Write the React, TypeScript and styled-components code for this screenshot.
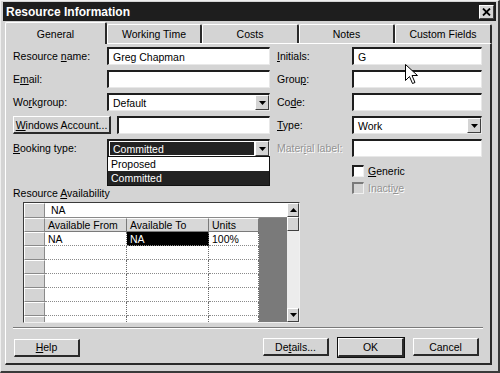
import React from "react";
import styled, { createGlobalStyle } from "styled-components";

const GlobalStyle = createGlobalStyle`
  html, body {
    margin: 0;
    padding: 0;
    background: #d4d4d4;
  }
  body {
    font-family: "Liberation Sans", Arial, sans-serif;
    font-size: 10.5px;
    color: #000;
  }
  * {
    box-sizing: border-box;
  }
`;

const Window = styled.div`
  position: relative;
  width: 500px;
  height: 373px;
  padding: 1px 2px 0 2px;
  background: #d4d4d4;
  border-right: 2px solid #3a3a3a;
  border-bottom: 2px solid #3a3a3a;
  border-left: 1px solid #efefef;
  border-top: 1px solid #efefef;
  overflow: hidden;
`;

const TitleBar = styled.div`
  display: flex;
  align-items: center;
  justify-content: space-between;
  height: 19px;
  padding: 0 2px 0 3px;
  background: #1e1e1e;
  color: #fff;
  font-weight: bold;
  font-size: 12px;
`;

const CloseButton = styled.div`
  display: flex;
  align-items: center;
  justify-content: center;
  width: 15px;
  height: 14px;
  background: #d4d4d4;
  border-top: 1px solid #fff;
  border-left: 1px solid #fff;
  border-right: 1px solid #404040;
  border-bottom: 1px solid #404040;
`;

const TabRow = styled.div`
  display: flex;
  align-items: flex-end;
  height: 21px;
  margin-top: 1px;
  padding-left: 2px;
  position: relative;
  z-index: 2;
`;

const Tab = styled.div<{ $active?: boolean; $w: number }>`
  display: flex;
  align-items: center;
  justify-content: center;
  width: ${(p) => p.$w}px;
  height: ${(p) => (p.$active ? 22 : 19)}px;
  margin-bottom: ${(p) => (p.$active ? -1 : 0)}px;
  background: #d4d4d4;
  border-top: 1px solid #fff;
  border-left: 1px solid #fff;
  border-right: 2px solid #2a2a2a;
  border-radius: 2px 2px 0 0;
`;

const Panel = styled.div`
  position: relative;
  margin-left: 2px;
  width: 487px;
  height: 322px;
  padding: 3px 7px 0 7px;
  border-top: 1px solid #fff;
  border-left: 1px solid #fff;
  border-right: 2px solid #2a2a2a;
  border-bottom: 2px solid #2a2a2a;
`;

const Form = styled.div`
  display: flex;
  gap: 7px;
`;

const Column = styled.div`
  display: flex;
  flex-direction: column;
  gap: 5px;
`;

const Row = styled.div`
  display: flex;
  align-items: center;
  height: 18px;
  position: relative;
`;

const Label = styled.div<{ $w: number; $disabled?: boolean }>`
  width: ${(p) => p.$w}px;
  color: ${(p) => (p.$disabled ? "#939393" : "#000")};
  text-shadow: ${(p) => (p.$disabled ? "1px 1px 0 #fff" : "none")};
  white-space: nowrap;
`;

const Field = styled.div<{ $w: number }>`
  display: flex;
  align-items: center;
  width: ${(p) => p.$w}px;
  height: 18px;
  padding-left: 4px;
  background: #fff;
  border-top: 2px solid #1e1e1e;
  border-left: 2px solid #1e1e1e;
  border-right: 1px solid #e8e8e8;
  border-bottom: 1px solid #e8e8e8;
  white-space: nowrap;
`;

const SelectBox = styled.div<{ $w: number }>`
  display: flex;
  width: ${(p) => p.$w}px;
  height: 18px;
  background: #fff;
  border-top: 2px solid #1e1e1e;
  border-left: 2px solid #1e1e1e;
  border-right: 1px solid #e8e8e8;
  border-bottom: 1px solid #e8e8e8;
`;

const SelectValue = styled.div<{ $dark?: boolean }>`
  flex: 1;
  display: flex;
  align-items: center;
  padding-left: 3px;
  margin: 1px;
  background: ${(p) => (p.$dark ? "#222" : "#fff")};
  color: ${(p) => (p.$dark ? "#fff" : "#000")};
`;

const ArrowButton = styled.div`
  display: flex;
  align-items: center;
  justify-content: center;
  width: 14px;
  height: 100%;
  background: #d4d4d4;
  border-top: 1px solid #fff;
  border-left: 1px solid #fff;
  border-right: 1px solid #404040;
  border-bottom: 1px solid #404040;
`;

const DropList = styled.div`
  position: absolute;
  left: 94px;
  top: 17px;
  width: 163px;
  background: #fff;
  border: 1px solid #111;
  z-index: 3;
`;

const DropItem = styled.div<{ $selected?: boolean }>`
  height: 14px;
  line-height: 14px;
  padding-left: 3px;
  background: ${(p) => (p.$selected ? "#222" : "#fff")};
  color: ${(p) => (p.$selected ? "#fff" : "#000")};
`;

const PushButton = styled.div<{ $w: number; $default?: boolean }>`
  display: flex;
  align-items: center;
  justify-content: center;
  width: ${(p) => p.$w}px;
  height: ${(p) => (p.$default ? 19 : 18)}px;
  background: #d4d4d4;
  border-top: 1px solid #fff;
  border-left: 1px solid #fff;
  border-right: 2px solid #2a2a2a;
  border-bottom: 2px solid #2a2a2a;
  outline: ${(p) => (p.$default ? "1px solid #111" : "none")};
  white-space: nowrap;
`;

const CheckRow = styled.div<{ $first?: boolean }>`
  display: flex;
  align-items: center;
  gap: 4px;
  height: 12px;
  margin-left: 75px;
  margin-top: ${(p) => (p.$first ? 3 : 0)}px;
`;

const CheckBox = styled.div<{ $disabled?: boolean }>`
  width: 12px;
  height: 12px;
  background: ${(p) => (p.$disabled ? "#d4d4d4" : "#fff")};
  border-top: 2px solid ${(p) => (p.$disabled ? "#7a7a7a" : "#1e1e1e")};
  border-left: 2px solid ${(p) => (p.$disabled ? "#7a7a7a" : "#1e1e1e")};
  border-right: 1px solid #f0f0f0;
  border-bottom: 1px solid #f0f0f0;
`;

const SectionLabel = styled.div`
  margin-top: 25px;
  height: 13px;
`;

const TableFrame = styled.div`
  display: flex;
  margin: 2px 0 0 10px;
  width: 277px;
  height: 121px;
  border-top: 1px solid #3a3a3a;
  border-left: 1px solid #3a3a3a;
  border-right: 1px solid #f0f0f0;
  border-bottom: 1px solid #f0f0f0;
  overflow: hidden;
`;

const TableBody = styled.div`
  display: flex;
  flex-direction: column;
  width: 263px;
`;

const TRow = styled.div<{ $h: number }>`
  display: flex;
  flex: none;
  height: ${(p) => p.$h}px;
`;

const RowHead = styled.div`
  width: 21px;
  flex: none;
  background: #d4d4d4;
  border-top: 1px solid #fff;
  border-left: 1px solid #fff;
  border-right: 1px solid #8a8a8a;
  border-bottom: 1px solid #8a8a8a;
`;

const EditCell = styled.div`
  flex: 1;
  display: flex;
  align-items: center;
  padding-left: 6px;
  background: #fff;
  border-bottom: 1px solid #8a8a8a;
`;

const HeadCell = styled.div<{ $w: number }>`
  width: ${(p) => p.$w}px;
  flex: none;
  display: flex;
  align-items: center;
  padding-left: 3px;
  background: #d8d8d8;
  border-top: 1px solid #fff;
  border-right: 1px solid #7a7a7a;
  border-bottom: 1px solid #7a7a7a;
  white-space: nowrap;
`;

const Cell = styled.div<{ $w: number; $selected?: boolean }>`
  width: ${(p) => p.$w}px;
  flex: none;
  display: flex;
  align-items: center;
  padding-left: 3px;
  background: ${(p) => (p.$selected ? "#000" : "#fff")};
  color: ${(p) => (p.$selected ? "#fff" : "#000")};
  border-right: 1px dotted #6a6a6a;
  border-bottom: 1px dotted #8a8a8a;
`;

const DarkFill = styled.div`
  flex: 1;
  background: #7a7a7a;
`;

const ScrollBar = styled.div`
  display: flex;
  flex-direction: column;
  width: 12px;
  flex: none;
  background: #ececec;
`;

const ScrollButton = styled.div<{ $h: number }>`
  display: flex;
  align-items: center;
  justify-content: center;
  height: ${(p) => p.$h}px;
  flex: none;
  background: #d4d4d4;
  border-top: 1px solid #fff;
  border-left: 1px solid #fff;
  border-right: 1px solid #404040;
  border-bottom: 1px solid #404040;
`;

const ScrollTrack = styled.div`
  flex: 1;
`;

const Separator = styled.div`
  margin-top: 4px;
  width: 470px;
  height: 2px;
  border-top: 1px solid #7a7a7a;
  border-bottom: 1px solid #fff;
`;

const ButtonRow = styled.div`
  display: flex;
  align-items: center;
  margin-top: 9px;
  padding-left: 1px;
`;

const Spacer = styled.div`
  flex: 1;
`;

const ButtonGroup = styled.div`
  display: flex;
  gap: 9px;
  margin-right: 4px;
`;

const Cursor = styled.svg`
  position: absolute;
  left: 404px;
  top: 63px;
  z-index: 5;
`;

const U = styled.span`
  text-decoration: underline;
`;

const DownArrow = () => (
  <svg width="7" height="4" viewBox="0 0 7 4">
    <path d="M0 0h7L3.5 4z" fill="#000" />
  </svg>
);

const UpArrow = () => (
  <svg width="7" height="4" viewBox="0 0 7 4">
    <path d="M0 4h7L3.5 0z" fill="#000" />
  </svg>
);

const tabs = [
  { name: "General", w: 102 },
  { name: "Working Time", w: 95 },
  { name: "Costs", w: 97 },
  { name: "Notes", w: 96 },
  { name: "Custom Fields", w: 97 },
];

const emptyRows = [0, 1, 2, 3, 4, 5];

export default function App() {
  return (
    <>
      <GlobalStyle />
      <Window>
        <TitleBar>
          <span>Resource Information</span>
          <CloseButton>
            <svg width="9" height="8" viewBox="0 0 9 8">
              <path d="M1 0.5l7 7M8 0.5l-7 7" stroke="#000" strokeWidth="1.8" />
            </svg>
          </CloseButton>
        </TitleBar>

        <TabRow>
          {tabs.map((t, i) => (
            <Tab key={t.name} $w={t.w} $active={i === 0}>
              {t.name}
            </Tab>
          ))}
        </TabRow>

        <Panel>
          <Form>
            <Column>
              <Row>
                <Label $w={94}>
                  Resource <U>n</U>ame:
                </Label>
                <Field $w={163}>Greg Chapman</Field>
              </Row>
              <Row>
                <Label $w={94}>
                  E<U>m</U>ail:
                </Label>
                <Field $w={163} />
              </Row>
              <Row>
                <Label $w={94}>
                  Wo<U>r</U>kgroup:
                </Label>
                <SelectBox $w={163}>
                  <SelectValue>Default</SelectValue>
                  <ArrowButton>
                    <DownArrow />
                  </ArrowButton>
                </SelectBox>
              </Row>
              <Row>
                <PushButton $w={98}>
                  <U>W</U>indows Account...
                </PushButton>
                <Spacer />
                <Field $w={153} />
              </Row>
              <Row>
                <Label $w={94}>
                  <U>B</U>ooking type:
                </Label>
                <SelectBox $w={163}>
                  <SelectValue $dark>Committed</SelectValue>
                  <ArrowButton>
                    <DownArrow />
                  </ArrowButton>
                </SelectBox>
                <DropList>
                  <DropItem>Proposed</DropItem>
                  <DropItem $selected>Committed</DropItem>
                </DropList>
              </Row>
              <SectionLabel>
                Resource <U>A</U>vailability
              </SectionLabel>
            </Column>

            <Column>
              <Row>
                <Label $w={75}>
                  <U>I</U>nitials:
                </Label>
                <Field $w={130}>G</Field>
              </Row>
              <Row>
                <Label $w={75}>
                  Grou<U>p</U>:
                </Label>
                <Field $w={130} />
              </Row>
              <Row>
                <Label $w={75}>
                  Co<U>d</U>e:
                </Label>
                <Field $w={130} />
              </Row>
              <Row>
                <Label $w={75}>
                  <U>T</U>ype:
                </Label>
                <SelectBox $w={130}>
                  <SelectValue>Work</SelectValue>
                  <ArrowButton>
                    <DownArrow />
                  </ArrowButton>
                </SelectBox>
              </Row>
              <Row>
                <Label $w={75} $disabled>
                  Mater<U>i</U>al label:
                </Label>
                <Field $w={130} />
              </Row>
              <CheckRow $first>
                <CheckBox />
                <span>
                  <U>G</U>eneric
                </span>
              </CheckRow>
              <CheckRow>
                <CheckBox $disabled />
                <Label $w={60} $disabled>
                  Inacti<U>v</U>e
                </Label>
              </CheckRow>
            </Column>
          </Form>

          <TableFrame>
            <TableBody>
              <TRow $h={15}>
                <RowHead />
                <EditCell>NA</EditCell>
              </TRow>
              <TRow $h={14}>
                <RowHead />
                <HeadCell $w={82}>Available From</HeadCell>
                <HeadCell $w={82}>Available To</HeadCell>
                <HeadCell $w={50}>Units</HeadCell>
                <DarkFill />
              </TRow>
              <TRow $h={14}>
                <RowHead />
                <Cell $w={82}>NA</Cell>
                <Cell $w={82} $selected>
                  NA
                </Cell>
                <Cell $w={50}>100%</Cell>
                <DarkFill />
              </TRow>
              {emptyRows.map((r) => (
                <TRow key={r} $h={14}>
                  <RowHead />
                  <Cell $w={82} />
                  <Cell $w={82} />
                  <Cell $w={50} />
                  <DarkFill />
                </TRow>
              ))}
            </TableBody>
            <ScrollBar>
              <ScrollButton $h={14}>
                <UpArrow />
              </ScrollButton>
              <ScrollButton $h={14} />
              <ScrollTrack />
              <ScrollButton $h={14}>
                <DownArrow />
              </ScrollButton>
            </ScrollBar>
          </TableFrame>

          <Separator />

          <ButtonRow>
            <PushButton $w={66}>
              <U>H</U>elp
            </PushButton>
            <Spacer />
            <ButtonGroup>
              <PushButton $w={66}>
                De<U>t</U>ails...
              </PushButton>
              <PushButton $w={66} $default>
                OK
              </PushButton>
              <PushButton $w={66}>Cancel</PushButton>
            </ButtonGroup>
          </ButtonRow>
        </Panel>

        <Cursor width="13" height="21" viewBox="0 0 13 21">
          <path
            d="M0.5 0.5v16l4-4 3 7 2.5-1-3-7h5.5z"
            fill="#fff"
            stroke="#000"
            strokeWidth="1"
          />
        </Cursor>
      </Window>
    </>
  );
}
